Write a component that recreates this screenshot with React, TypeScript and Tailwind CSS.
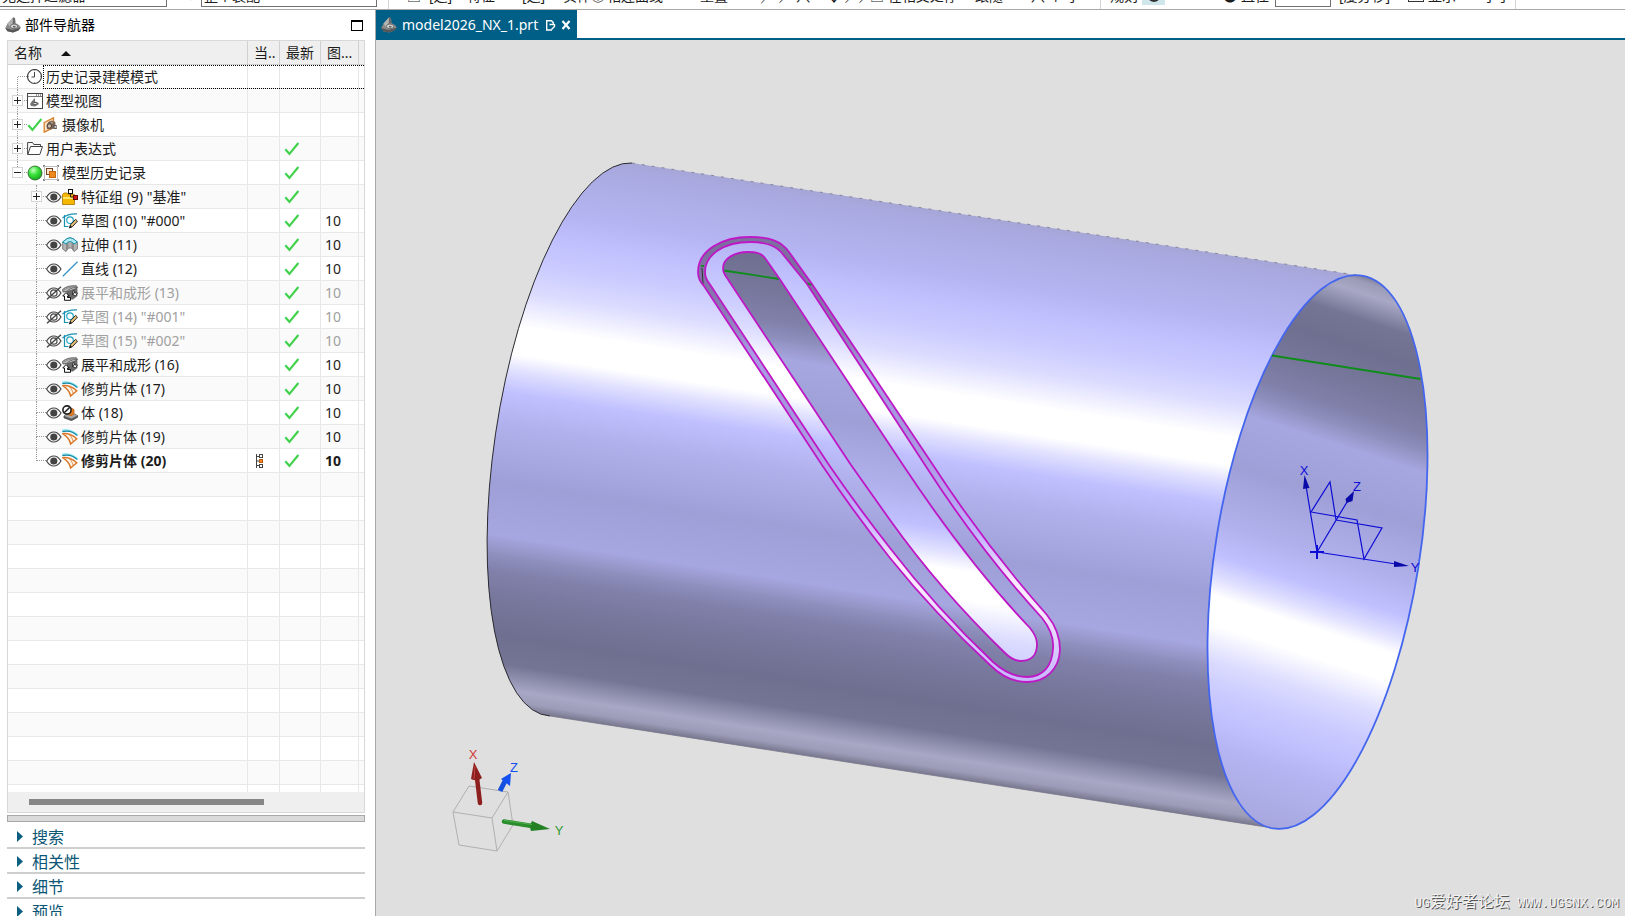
import type { ReactNode } from "react";

type IconProps = { className?: string };

type TreeRow = {
  label: string;
  level: 0 | 1;
  icons: ReactNode[];
  expander?: "+" | "-";
  latest?: boolean;
  layer?: string;
  muted?: boolean;
  bold?: boolean;
  current?: boolean;
  focused?: boolean;
  guideTop?: boolean;
  guideBottom?: boolean;
};

function PartIcon({ className = "size-4" }: IconProps) {
  return (
    <svg viewBox="0 0 16 16" className={className} aria-hidden="true">
      <path d="M0.3 11L2.5 6.5L8 0.6L10 1L10.4 6L14 8L15.8 10.6L13.4 13.4L8 15.4L2.4 14.2Z" fill="#8b8b8b" />
      <path d="M2.5 6.5L8 0.6L8.8 5.6L5 10Z" fill="#b4b4b4" />
      <path d="M8 0.6L10 1L10.4 6L7.6 7.2Z" fill="#6a6a6a" />
      <path d="M0.3 11L7.5 13L15.8 10.6L13.4 13.4L8 15.4L2.4 14.2Z" fill="#565656" />
      <ellipse cx="9" cy="9.4" rx="3.6" ry="2.4" fill="#dcdcdc" stroke="#6a6a6a" />
      <ellipse cx="9.2" cy="9.8" rx="1.6" ry="1" fill="#666" />
    </svg>
  );
}

function ClockIcon() {
  return (
    <svg viewBox="0 0 16 16" className="size-4" fill="none" stroke="#444" aria-hidden="true">
      <circle cx="7.5" cy="7.5" r="7" strokeWidth="1.2" />
      <path d="M7.5 3V8H4.5" />
      <path d="M7.5 1V2M7.5 13V14M1 7.5H2M13 7.5H14" stroke="#999" />
    </svg>
  );
}

function ModelViewIcon() {
  return (
    <svg viewBox="0 0 16 16" className="size-4" aria-hidden="true">
      <rect x="0.5" y="0.5" width="15" height="15" fill="#fff" stroke="#444" />
      <path d="M1 3.5H15" stroke="#777" />
      <path d="M9 2H10M11 2H12M13 2H14" stroke="#333" />
      <path d="M3 11L5 8L8 5V8.5L11 9.5L12 11L8 13.5L4 13Z" fill="#777" />
      <ellipse cx="8" cy="10.6" rx="2" ry="1.2" fill="#ddd" stroke="#555" />
    </svg>
  );
}

function CheckIcon({ className = "size-4" }: IconProps) {
  return (
    <svg viewBox="0 0 16 16" className={className} aria-hidden="true">
      <path d="M1.3 8.3L5.4 12.8L14.4 2" fill="none" stroke="#3fd24a" strokeWidth="2.1" />
    </svg>
  );
}

function CameraIcon() {
  return (
    <svg viewBox="0 0 16 16" className="size-4" aria-hidden="true">
      <path d="M1.2 5.5L10.5 0.8V10.5L1.2 15.2Z" fill="#fbe3c8" stroke="#d9822b" strokeWidth="1.3" />
      <path d="M3.6 8L5.5 4.8L9 3.4L12.4 5V10.4L8 12.6L4 12Z" fill="#7c6250" />
      <circle cx="6.4" cy="9" r="2.2" fill="#c9b8a8" stroke="#4c4038" />
      <circle cx="9" cy="5.6" r="1.2" fill="#a89888" />
      <path d="M10 7.5L13.8 8.2V12L10.6 12Z" fill="#5a5a5a" />
      <circle cx="12.4" cy="10" r="1.1" fill="#ccc" />
    </svg>
  );
}

function FolderIcon() {
  return (
    <svg viewBox="0 0 16 16" className="size-4" fill="none" stroke="#444" aria-hidden="true">
      <path d="M0.6 13.5V1.5H5.5L6.8 3.5H13.5V5.5" />
      <path d="M0.8 13.5L3.5 5.5H15.5L12.8 13.5Z" fill="#fff" />
    </svg>
  );
}

function GreenBallIcon() {
  return (
    <svg viewBox="0 0 16 16" className="size-4" aria-hidden="true">
      <defs>
        <radialGradient id="ball" cx="0.38" cy="0.3" r="0.75">
          <stop offset="0" stopColor="#c9ffc4" />
          <stop offset="0.45" stopColor="#3be33b" />
          <stop offset="1" stopColor="#16a51c" />
        </radialGradient>
      </defs>
      <circle cx="8" cy="8" r="7" fill="url(#ball)" stroke="#245c26" strokeWidth="0.8" />
    </svg>
  );
}

function HistoryIcon() {
  return (
    <svg viewBox="0 0 16 16" className="size-4" aria-hidden="true">
      <rect x="1.5" y="1.5" width="13" height="13" fill="#fff" stroke="#bdbdbd" />
      <path d="M0 0.5H2M0.5 0V2M14 0.5H16M15.5 0V2M0.5 14V16M0 15.5H2M15.5 14V16M14 15.5H16" stroke="#888" />
      <rect x="3.5" y="3.5" width="6" height="6" fill="#fde5d0" stroke="#6d4124" />
      <rect x="6.5" y="6.5" width="6" height="6" fill="#ee8a1d" stroke="#c4660f" />
    </svg>
  );
}

function EyeIcon() {
  return (
    <svg viewBox="0 0 16 16" className="size-4" fill="none" stroke="#444" aria-hidden="true">
      <path d="M0.6 8C2.5 4.8 5 3 7.8 3S13 4.8 15 8C13 11.2 10.5 13 7.8 13S2.5 11.2 0.6 8Z" strokeWidth="1.2" />
      <circle cx="7.8" cy="8" r="3.6" fill="#444" stroke="none" />
    </svg>
  );
}

function EyeOffIcon() {
  return (
    <svg viewBox="0 0 16 16" className="size-4" fill="none" stroke="#444" aria-hidden="true">
      <path d="M0.6 8C2.5 4.8 5 3 7.8 3S13 4.8 15 8C13 11.2 10.5 13 7.8 13S2.5 11.2 0.6 8Z" strokeWidth="1.2" />
      <circle cx="7.8" cy="8" r="3.2" strokeWidth="1.2" />
      <path d="M1 14.2L15 1.8" strokeWidth="1.4" />
    </svg>
  );
}

function FeatureGroupIcon() {
  return (
    <svg viewBox="0 0 16 16" className="size-4" aria-hidden="true">
      <path d="M0.5 15.5V5.5L2 4H5L6 5.500H12.500V15.5Z" fill="#f5b800" stroke="#a87400" strokeWidth="0.8" />
      <path d="M1 8H12V10H1Z" fill="#ffe36b" />
      <path d="M8.5 4V8H12" stroke="#222" fill="none" />
      <rect x="6.5" y="0.5" width="4" height="4" fill="#fff" stroke="#111" />
      <rect x="11.5" y="6.5" width="4" height="4" fill="#d01818" stroke="#5c0b0b" />
    </svg>
  );
}

function SketchIcon() {
  return (
    <svg viewBox="0 0 16 16" className="size-4" fill="none" aria-hidden="true">
      <path d="M2.5 2V13.5H6.5" stroke="#1893b0" strokeWidth="1.2" />
      <path d="M0.5 5C4 2 9 0.6 15 0.8" stroke="#1893b0" strokeWidth="1.2" />
      <circle cx="8" cy="7.2" r="3.3" stroke="#1fa2c0" strokeWidth="1.2" />
      <path d="M7.5 14.8L8.5 11.8L13.6 6.4L15.5 8.2L10.3 13.8Z" fill="#e8c27a" stroke="#222" />
      <path d="M7.2 15.2L8.3 12L10 13.8Z" fill="#222" />
    </svg>
  );
}

function ExtrudeIcon() {
  return (
    <svg viewBox="0 0 16 16" className="size-4" aria-hidden="true">
      <path d="M0.7 5L5 1.6L8 0.8L11 1.6L15.4 5V12L12 14.5L9.5 11H6.5L4 14.5L0.7 12Z" fill="#b4b4b4" stroke="#6a6a6a" strokeWidth="0.8" />
      <path d="M4 7L6.500 5V11L4 14.5ZM12 7L9.500 5V11L12 14.5Z" fill="#8c8c8c" />
      <path d="M0.7 5L5 1.6L8 0.8L11 1.6L15.4 5L12 7L9.5 4.8H6.5L4 7Z" fill="#aee8f2" stroke="#1893b0" />
    </svg>
  );
}

function LineIcon() {
  return (
    <svg viewBox="0 0 16 16" className="size-4" aria-hidden="true">
      <path d="M0.8 15.3L15.5 0.8" stroke="#2f93c4" strokeWidth="1.2" />
    </svg>
  );
}

function FlattenIcon() {
  return (
    <svg viewBox="0 0 16 16" className="size-4" aria-hidden="true">
      <path d="M5 6L15.4 2.5V11L11 14.5L5 14Z" fill="#6a6a6a" />
      <path d="M0.5 4.500C4 1.500 8 0.500 14.500 0.800L15.4 2.5C10 2.500 7 4 5 6.500L1 7Z" fill="#b5b5b5" stroke="#444" strokeWidth="0.8" />
      <path d="M2 5C5 2.800 8 2 14 1.800" stroke="#777" fill="none" strokeWidth="0.6" />
      <path d="M0.800 11L4 7.5L7.200 11H5.5V12.500H8.500V15.3H2.5V11Z" fill="#fff" stroke="#111" />
      <path d="M10.500 6.500L12 5.500L12.500 8H15.500L13.5 11L10 9H11.500Z" fill="#fff" stroke="#111" strokeWidth="0.8" />
    </svg>
  );
}

function TrimSheetIcon() {
  return (
    <svg viewBox="0 0 16 16" className="size-4" fill="none" aria-hidden="true">
      <path d="M0.3 1.2C6 0.6 11 2 15.5 6" stroke="#7fe0ee" strokeWidth="1.6" />
      <path d="M0.3 2.6C6 1.2 11 2.4 15.3 6.6" stroke="#1787a5" strokeWidth="1.2" />
      <path d="M1 4.8C5 3.8 11 5.8 14.8 9.8L8.600 15C7.8 11 4.6 7 1 4.8Z" fill="#fdf3e9" stroke="#d9782a" strokeWidth="1.5" />
      <path d="M7.500 5.500C9.500 8 10.500 10 11 12" stroke="#d9782a" strokeWidth="0.8" />
    </svg>
  );
}

function BodyIcon() {
  return (
    <svg viewBox="0 0 16 16" className="size-4" aria-hidden="true">
      <path d="M2 11L8 7.500L15.5 10.5V12.300L9.5 15.6L2 12.8Z" fill="#5e5e5e" stroke="#333" strokeWidth="0.8" />
      <path d="M2 11L8 7.500L15.5 10.5L9.5 13.5Z" fill="#a8a8a8" />
      <path d="M6 4.5L9 3L12 4.5V9L9 10.800L6 9.5Z" fill="#e47b22" stroke="#c0600f" strokeWidth="0.8" />
      <circle cx="5" cy="5" r="4.100" fill="#fff" stroke="#222" strokeWidth="1.6" />
      <path d="M2.2 7.8L7.8 2.2" stroke="#222" strokeWidth="1.6" />
    </svg>
  );
}

function CurrentIcon() {
  return (
    <svg viewBox="0 0 10 16" className="h-4 w-2.5" fill="none" aria-hidden="true">
      <path d="M1.5 1V15M1.5 3.5H4.5M1.5 8H4.5M1.5 12.5H4.5" stroke="#444" />
      <rect x="4.5" y="1.5" width="3" height="3" stroke="#444" />
      <rect x="4.5" y="6.5" width="3" height="3" fill="#f08c28" stroke="#b85a10" />
      <rect x="4.5" y="11.5" width="3" height="3" stroke="#444" />
    </svg>
  );
}

const rows: TreeRow[] = [
  { label: "历史记录建模模式", level: 0, icons: [<ClockIcon />], focused: true, guideBottom: true },
  { label: "模型视图", level: 0, icons: [<ModelViewIcon />], expander: "+", guideTop: true, guideBottom: true },
  { label: "摄像机", level: 0, icons: [<CheckIcon />, <CameraIcon />], expander: "+", guideTop: true, guideBottom: true },
  { label: "用户表达式", level: 0, icons: [<FolderIcon />], expander: "+", latest: true, guideTop: true, guideBottom: true },
  { label: "模型历史记录", level: 0, icons: [<GreenBallIcon />, <HistoryIcon />], expander: "-", latest: true, guideTop: true },
  { label: '特征组 (9) "基准"', level: 1, icons: [<EyeIcon />, <FeatureGroupIcon />], expander: "+", latest: true, guideTop: true, guideBottom: true },
  { label: '草图 (10) "#000"', level: 1, icons: [<EyeIcon />, <SketchIcon />], latest: true, layer: "10", guideTop: true, guideBottom: true },
  { label: "拉伸 (11)", level: 1, icons: [<EyeIcon />, <ExtrudeIcon />], latest: true, layer: "10", guideTop: true, guideBottom: true },
  { label: "直线 (12)", level: 1, icons: [<EyeIcon />, <LineIcon />], latest: true, layer: "10", guideTop: true, guideBottom: true },
  { label: "展平和成形 (13)", level: 1, icons: [<EyeOffIcon />, <FlattenIcon />], latest: true, layer: "10", muted: true, guideTop: true, guideBottom: true },
  { label: '草图 (14) "#001"', level: 1, icons: [<EyeOffIcon />, <SketchIcon />], latest: true, layer: "10", muted: true, guideTop: true, guideBottom: true },
  { label: '草图 (15) "#002"', level: 1, icons: [<EyeOffIcon />, <SketchIcon />], latest: true, layer: "10", muted: true, guideTop: true, guideBottom: true },
  { label: "展平和成形 (16)", level: 1, icons: [<EyeIcon />, <FlattenIcon />], latest: true, layer: "10", guideTop: true, guideBottom: true },
  { label: "修剪片体 (17)", level: 1, icons: [<EyeIcon />, <TrimSheetIcon />], latest: true, layer: "10", guideTop: true, guideBottom: true },
  { label: "体 (18)", level: 1, icons: [<EyeIcon />, <BodyIcon />], latest: true, layer: "10", guideTop: true, guideBottom: true },
  { label: "修剪片体 (19)", level: 1, icons: [<EyeIcon />, <TrimSheetIcon />], latest: true, layer: "10", guideTop: true, guideBottom: true },
  { label: "修剪片体 (20)", level: 1, icons: [<EyeIcon />, <TrimSheetIcon />], latest: true, layer: "10", bold: true, current: true, guideTop: true },
];

const emptyRows = Array.from({ length: 14 }, (_, index) => index);
const sections = ["搜索", "相关性", "细节", "预览"];

const headCell = "h-6 border-b border-[#d0d0d0] p-0 pt-px pl-1.5 font-normal whitespace-nowrap";
const cell = "h-6 border-r border-b border-[#e8e8e8] p-0";

function Guides({ row }: { row: TreeRow }) {
  const nested = row.level === 1;
  return (
    <div className={`relative flex h-full shrink-0 items-center justify-end ${nested ? "w-[38px]" : "w-[19px]"}`}>
      {row.guideTop && (
        <span className="absolute top-0 right-[9px] h-1/2 border-l border-dotted border-[#999]" />
      )}
      {row.guideBottom && (
        <span className="absolute right-[9px] bottom-0 h-1/2 border-l border-dotted border-[#999]" />
      )}
      <span className="w-[9px] border-t border-dotted border-[#999]" />
      {row.expander && (
        <button
          type="button"
          aria-label={row.expander === "+" ? `展开 ${row.label}` : `折叠 ${row.label}`}
          className="absolute right-1 flex size-[11px] items-center justify-center border border-[#d4d4d4] bg-white"
        >
          <svg viewBox="0 0 7 7" className="size-[7px]" stroke="#222" aria-hidden="true">
            <path d={row.expander === "+" ? "M0 3.5H7M3.5 0V7" : "M0 3.5H7"} />
          </svg>
        </button>
      )}
    </div>
  );
}

function PartNavigator() {
  return (
    <aside className="flex w-[376px] shrink-0 flex-col border-r border-[#a8a8a8] bg-white">
      <header className="flex h-[30px] shrink-0 items-center pr-3 pl-[5px]">
        <PartIcon />
        <h1 className="ml-1 flex-1 text-sm text-black">部件导航器</h1>
        <button type="button" aria-label="最大化" className="h-[11px] w-3 border border-t-2 border-black" />
      </header>

      <div className="mr-2.5 ml-[7px] flex min-h-0 flex-1 flex-col border border-[#d8d8d8]">
        <div className="min-h-0 flex-1 overflow-hidden">
          <table className="w-full table-fixed border-separate border-spacing-0 text-sm leading-5 text-[#1c1c1c]">
            <colgroup>
              <col className="w-[240px]" />
              <col className="w-8" />
              <col className="w-[41px]" />
              <col className="w-[38px]" />
              <col />
            </colgroup>
            <thead>
              <tr className="bg-[#efefef] text-left">
                <th className={`${headCell} border-r`}>
                  <button type="button" className="flex items-center gap-[19px]">
                    名称
                    <svg viewBox="0 0 10 5" className="h-[5px] w-2.5" aria-hidden="true">
                      <path d="M0 5L5 0L10 5Z" fill="#111" />
                    </svg>
                  </button>
                </th>
                <th className={`${headCell} border-r`}>当..</th>
                <th className={`${headCell} border-r`}>最新</th>
                <th className={`${headCell} border-r`}>图...</th>
                <th className="h-6 border-b border-[#d0d0d0] p-0" />
              </tr>
            </thead>
            <tbody>
              {rows.map((row) => (
                <tr
                  key={row.label}
                  className={`odd:bg-white even:bg-[#fafafa] ${row.muted ? "text-[#a0a0a0]" : ""} ${row.bold ? "font-bold" : ""}`}
                >
                  <td className={`${cell} relative`}>
                    <div className="flex h-[23px] items-center">
                      <Guides row={row} />
                      {row.icons.map((icon, index) => (
                        <span key={index} className="shrink-0 pt-px">{icon}</span>
                      ))}
                      <span className="ml-[3px] pt-px whitespace-nowrap">{row.label}</span>
                    </div>
                    {row.focused && (
                      <span className="absolute top-0 left-[35px] h-6 w-[321px] border border-r-0 border-dotted border-black" />
                    )}
                  </td>
                  <td className={`${cell} pl-[7px]`}>{row.current && <CurrentIcon />}</td>
                  <td className={`${cell} pt-px pl-1`}>{row.latest && <CheckIcon />}</td>
                  <td className={`${cell} pt-px pl-1`}>{row.layer}</td>
                  <td className="h-6 border-b border-[#e8e8e8] p-0" />
                </tr>
              ))}
              {emptyRows.map((row) => (
                <tr key={row} className="odd:bg-white even:bg-[#fafafa]">
                  <td className={cell} />
                  <td className={cell} />
                  <td className={cell} />
                  <td className={cell} />
                  <td className="h-6 border-b border-[#e8e8e8] p-0" />
                </tr>
              ))}
            </tbody>
          </table>
        </div>
        <div className="flex h-5 shrink-0 items-center bg-[#efefef] pl-[21px]">
          <div className="h-1.5 w-[235px] bg-[#868686]" />
        </div>
      </div>

      <div className="mt-0.5 mr-2.5 ml-[7px] h-[7px] shrink-0 border border-[#a8a8a8] bg-[#dadada]" />

      <div className="mr-2.5 ml-[7px] h-[94px] shrink-0 overflow-hidden">
        {sections.map((section) => (
          <button
            key={section}
            type="button"
            className="flex h-[25px] w-full items-center gap-[9px] border-b-2 border-[#cfcfcf] pt-0.5 pl-2.5 text-base leading-5 text-[#0b5675] first:h-[27px] first:pt-1"
          >
            <svg viewBox="0 0 6 11" className="h-[11px] w-1.5" aria-hidden="true">
              <path d="M0 0L6 5.5L0 11Z" fill="#0b5f80" />
            </svg>
            {section}
          </button>
        ))}
      </div>
    </aside>
  );
}

function BarText({ children, className }: { children: ReactNode; className: string }) {
  return <span className={`shrink-0 pb-1.5 whitespace-nowrap ${className}`}>{children}</span>;
}

function BarSeparator({ className }: IconProps) {
  return <span className={`h-4 shrink-0 border-l border-[#d4d4d4] ${className}`} />;
}

/* Lower edge of the selection bar; the rest is scrolled off the top. */
function SelectionBar() {
  return (
    <div className="flex h-2.5 shrink-0 items-end overflow-hidden border-b border-[#a8a8a8] bg-white text-sm leading-[14px] text-[#1c1c1c]">
      <span className="mb-0.5 w-[167px] shrink-0 border border-l-0 border-[#707070] pb-[3px] pl-0.5 whitespace-nowrap">无选择过滤器</span>
      <BarText className="w-[34px] pl-5 text-[#aaa]">▾</BarText>
      <span className="mb-0.5 w-[176px] shrink-0 border border-[#707070] pb-[3px] pl-0.5 whitespace-nowrap">整个装配</span>
      <BarSeparator className="mr-[18px] ml-[11px]" />
      <BarText className="w-[22px]">▣</BarText>
      <BarText className="w-[38px]">[选]</BarText>
      <BarText className="w-[55px]">特征</BarText>
      <BarText className="w-[41px]">[选]</BarText>
      <BarText className="w-7">实体</BarText>
      <BarText className="w-4">◎</BarText>
      <BarText className="w-[93px]">相连曲线</BarText>
      <BarText className="w-[61px]">重置</BarText>
      <BarText className="w-[66px]">╱ ∕ 八</BarText>
      <BarText className="w-[43px]">↓ ∕∕</BarText>
      <BarText className="w-[105px]">□ 在相交处停</BarText>
      <BarText className="w-[56px]">跟随</BarText>
      <BarText className="w-[69px]">八 个 小</BarText>
      <BarSeparator className="mr-[9px]" />
      <BarText className="w-8">规则</BarText>
      <span className="mb-1 flex h-5 w-[23px] shrink-0 items-end justify-center bg-[#cfe6ea] pb-[3px]">
        <span className="size-3 rounded-full bg-[#333]" />
      </span>
      <BarText className="w-[76px] pl-[58px]">●</BarText>
      <BarText className="w-[34px]">直径</BarText>
      <span className="mb-0.5 h-5 w-14 shrink-0 border border-[#707070]" />
      <BarText className="w-[77px] pl-2">[度分秒]</BarText>
      <span className="mb-[7px] size-4 shrink-0 border border-[#333]" />
      <BarText className="w-[59px] pl-1">显示</BarText>
      <BarText className="w-8">小小</BarText>
      <BarSeparator />
    </div>
  );
}

function FileTabs() {
  return (
    <div className="flex h-[30px] shrink-0 border-b-2 border-[#005f87] bg-white">
      <div className="flex h-[30px] items-center bg-[#005f87] pr-1.5 pl-[5px] text-white">
        <PartIcon />
        <button type="button" className="ml-[5px] text-sm">model2026_NX_1.prt</button>
        <svg viewBox="0 0 11 12" className="ml-[7px] h-3 w-[11px]" fill="none" stroke="#fff" strokeWidth="1.4" aria-hidden="true">
          <path d="M7 11H1.7V1.7H6.500L8.300 3.500V5" />
          <path d="M4.500 5.500H9.500M9.500 5V7.500L6.500 10.500" />
        </svg>
        <button type="button" aria-label="关闭" className="ml-[5px]">
          <svg viewBox="0 0 10 10" className="size-2.5" stroke="#fff" strokeWidth="2.2" aria-hidden="true">
            <path d="M1.5 1L8.5 9M8.5 1L1.5 9" />
          </svg>
        </button>
      </div>
    </div>
  );
}

const shades: [number, string][] = [
  [0, "#a5a5d6"],
  [0.015, "#a9a9e0"],
  [0.06, "#aeaee8"],
  [0.11, "#b4b4f2"],
  [0.155, "#bfbffe"],
  [0.21, "#cbcbff"],
  [0.26, "#dcdcff"],
  [0.32, "#ffffff"],
  [0.37, "#ffffff"],
  [0.4, "#e0e0ff"],
  [0.44, "#c0c0ff"],
  [0.5, "#b0b0ec"],
  [0.6, "#9f9fd8"],
  [0.695, "#a6a6e0"],
  [0.73, "#8f8fbe"],
  [0.76, "#8080aa"],
  [0.81, "#77779c"],
  [0.87, "#6f6f90"],
  [0.92, "#747494"],
  [0.965, "#a8a8c6"],
  [0.985, "#9c9cb8"],
  [1, "#75758c"],
];

const ringOuter =
  "M698 272C698 250 722 237 750 237C770 237 781 241 789 252L812 284L933 465Q985 545 1047 615C1056 626 1060 638 1060 650C1059 669 1046 682 1027 682C1012 682 1000 675 990 665Q935 614 890 558Q855 514 822 465L704 286Q698 280 698 272Z";
const ringInner =
  "M705 272C705 254 725 242 750 242C766 242 775 245 781 252L807 284L925 465Q979 549 1042 618C1050 628 1054 638 1053 649C1052 666 1043 677 1027 677C1013 677 1003 671 993 662Q936 608 890 548Q860 510 829 465L709 283Q705 278 705 272Z";
const slot =
  "M723 268C723 259 734 252 748 252C756 252 761 253 765 258L779 278L903 465Q968 563 1030 628C1034 633 1037 638 1037 644C1037 655 1031 661 1021 661C1015 661 1010 658 1005 653Q940 590 890 520L851 465L725 275Q723 272 723 268Z";

function Viewport() {
  return (
    <div className="relative min-h-0 flex-1 bg-[#dfdfdf]">
      <svg viewBox="376 40 1249 876" className="h-full w-full" role="img" aria-label="圆柱模型">
        <defs>
          <linearGradient id="outside" gradientUnits="userSpaceOnUse" x1="634" y1="163" x2="548" y2="716">
            {shades.map(([offset, color]) => (
              <stop key={offset} offset={offset} stopColor={color} />
            ))}
          </linearGradient>
          <linearGradient id="inside" gradientUnits="userSpaceOnUse" x1="548" y1="716" x2="634" y2="163">
            {shades.map(([offset, color]) => (
              <stop key={offset} offset={offset} stopColor={color} />
            ))}
          </linearGradient>
        </defs>

        <path d="M632 163A95 279 9.1 0 0 550 716L1279 829L1356 275Z" fill="url(#outside)" />
        <path d="M632 163A95 279 9.1 0 0 550 716" fill="none" stroke="#2a2a30" />
        <path d="M632 163L1356 275" stroke="#77778a" strokeWidth="0.8" strokeDasharray="3 7" />
        <path d="M550 716L1279 829" stroke="#77778a" strokeWidth="0.8" />
        <ellipse cx="1317.5" cy="552" rx="102" ry="280" transform="rotate(9.1 1317.5 552)" fill="url(#inside)" stroke="#4466ee" strokeWidth="1.8" />
        <path d="M1272 355.500L1420.500 379" stroke="#0f8c1c" strokeWidth="1.8" />

        <path d={`${ringOuter}${ringInner}`} fillRule="evenodd" fill="url(#inside)" />
        <path d={`${ringOuter}${ringInner}`} fillRule="evenodd" fill="#d060ff" fillOpacity="0.14" />
        <path d={slot} fill="url(#inside)" />
        <g fill="none" stroke="#0f8c1c" strokeWidth="1.8">
          <path d="M724 270.500L779 279" />
          <path d="M806 283L812 285" />
          <path d="M701 266H704" />
        </g>
        <path d="M702 268L703 284" stroke="#333" />
        <g fill="none" stroke="#be18c6" strokeWidth="1.8">
          <path d={ringOuter} />
          <path d={ringInner} />
          <path d={slot} />
        </g>

        {/* Datum coordinate system */}
        <g fill="none" stroke="#0c0cd4" strokeWidth="1.2">
          <path d="M1317 552L1306 486M1317 552L1350 497M1317 552L1396 564" />
          <path d="M1311 512L1330 482L1336 520M1311 512L1357 520L1364 559L1382 528L1336 520" />
          <path d="M1310 552H1324M1317 545V559" strokeWidth="2" />
        </g>
        <g fill="#0a0aa8">
          <path d="M1304.500 475L1309.500 488L1303 489Z" />
          <path d="M1354 491L1352.500 501L1346.500 503L1345.500 499Z" />
          <path d="M1409 566L1394 561V567Z" />
        </g>
        <g fill="#0c0cd4" fontFamily="Liberation Sans, sans-serif" fontSize="13" textAnchor="middle">
          <text x="1304" y="475">X</text>
          <text x="1357" y="491">Z</text>
          <text x="1415" y="572">Y</text>
        </g>

        {/* View triad */}
        <g fill="none" stroke="#b0b0b0">
          <path d="M453 812L492 818L497 851L459 845ZM453 812L469 786L508 792L492 818M508 792L513 825L497 851" />
        </g>
        <path d="M500 791L505 781" stroke="#1450e0" strokeWidth="5" />
        <path d="M511 773L501 779L510 786Z" fill="#1450f0" />
        <path d="M480 803L477 778" stroke="#8e1f1f" strokeWidth="4.500" strokeLinecap="round" />
        <path d="M474 762L471 779Q477 782 482 778Z" fill="#8e1f1f" />
        <path d="M475 766L474 779" stroke="#b44" />
        <path d="M504 821.500L532 826" stroke="#2a8c2a" strokeWidth="4.500" strokeLinecap="round" />
        <path d="M550 829L532 821Q529 826 531 831Z" fill="#238023" />
        <path d="M504 820.500L532 824.500" stroke="#4cb04c" />
        <g fontFamily="Liberation Sans, sans-serif" fontSize="13" textAnchor="middle">
          <text x="473" y="759" fill="#d03a3a">X</text>
          <text x="514" y="772" fill="#1450f0">Z</text>
          <text x="559" y="835" fill="#2f9a2f">Y</text>
        </g>
      </svg>

      <p className="absolute right-1.5 bottom-0.5 font-['Liberation_Mono','Noto_Sans_CJK_SC',monospace] text-[13px] leading-5 whitespace-pre text-[#f2f2f2] [text-shadow:1px_1px_0_#555]">
        UG<span className="text-base leading-5">爱好者论坛</span> WWW.UGSNX.COM
      </p>
    </div>
  );
}

export default function App() {
  return (
    <div className="flex h-screen flex-col overflow-hidden bg-white font-['Noto_Sans','Noto_Sans_CJK_SC',sans-serif]">
      <SelectionBar />
      <div className="flex min-h-0 flex-1">
        <PartNavigator />
        <main className="flex min-w-0 flex-1 flex-col">
          <FileTabs />
          <Viewport />
        </main>
      </div>
    </div>
  );
}
